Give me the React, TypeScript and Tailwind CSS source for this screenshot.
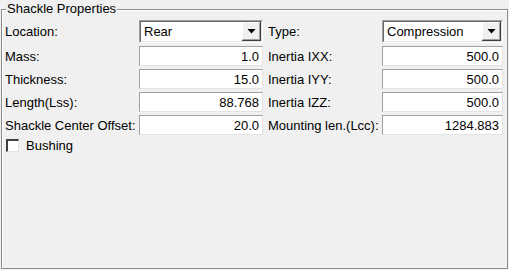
import React from "react";

const font = { fontFamily: '"Liberation Sans", Arial, sans-serif' };

function Combo({ value }: { value: string }) {
  return (
    <div className="h-[23px] flex border-t-[#a0a0a0] border-l-[#a0a0a0] border-b-white border-r-white border bg-white">
      <div className="flex-1 flex border-t border-l border-t-[#696969] border-l-[#696969] border-b border-r border-b-[#e3e3e3] border-r-[#e3e3e3]">
        <div className="flex-1 flex items-center pl-[3px] text-[13px] leading-[15px] text-black">{value}</div>
        <div className="w-[19px] bg-[#f0f0f0] border-b border-r border-b-[#404040] border-r-[#404040]">
          <div className="w-full h-full border-t border-l border-t-white border-l-white border-b border-r border-b-[#a0a0a0] border-r-[#a0a0a0] flex items-center justify-center">
            <svg width="9" height="5" viewBox="0 0 9 5">
              <path d="M0.5 0h8l-4 4.5z" fill="#000" />
            </svg>
          </div>
        </div>
      </div>
    </div>
  );
}

function Field({ value }: { value: string }) {
  return (
    <div className="h-[20px] bg-white border border-t-[#a0a0a0] border-l-[#a0a0a0] border-b-[#e3e3e3] border-r-[#e3e3e3] flex items-center justify-end pr-[3px] text-[13px] leading-[15px] text-black">
      {value}
    </div>
  );
}

function Label({ text }: { text: string }) {
  return <div className="flex items-center text-[13px] leading-[15px] text-black whitespace-nowrap">{text}</div>;
}

export default function App() {
  return (
    <div className="w-[509px] h-[270px] bg-[#f0f0f0] relative" style={font}>
      <div className="absolute left-[1px] top-[9px] w-[507px] h-[260px] border border-[#8c8c8c] shadow-[inset_1px_1px_0_#ffffff]" />
      <div className="absolute left-[6px] top-[1px] px-[1px] bg-[#f0f0f0] text-[13px] leading-[15px] text-black">
        Shackle Properties
      </div>
      <div className="relative pt-[20px] pl-[5px]">
        <div className="grid grid-cols-[134px_124px_5px_114px_121px] gap-y-[3px]">
          <Label text="Location:" />
          <Combo value="Rear" />
          <div />
          <Label text="Type:" />
          <Combo value="Compression" />

          <Label text="Mass:" />
          <Field value="1.0" />
          <div />
          <Label text="Inertia IXX:" />
          <Field value="500.0" />

          <Label text="Thickness:" />
          <Field value="15.0" />
          <div />
          <Label text="Inertia IYY:" />
          <Field value="500.0" />

          <Label text="Length(Lss):" />
          <Field value="88.768" />
          <div />
          <Label text="Inertia IZZ:" />
          <Field value="500.0" />

          <Label text="Shackle Center Offset:" />
          <Field value="20.0" />
          <div />
          <Label text="Mounting len.(Lcc):" />
          <Field value="1284.883" />
        </div>
        <div className="flex items-center mt-[3px] pl-[1px] h-[15px]">
          <div className="w-[13px] h-[13px] bg-white border-t-2 border-l-2 border-t-[#404040] border-l-[#404040] border-b border-r border-b-[#e3e3e3] border-r-[#e3e3e3]" />
          <span className="ml-[7px] text-[13px] leading-[15px] text-black">Bushing</span>
        </div>
      </div>
    </div>
  );
}
